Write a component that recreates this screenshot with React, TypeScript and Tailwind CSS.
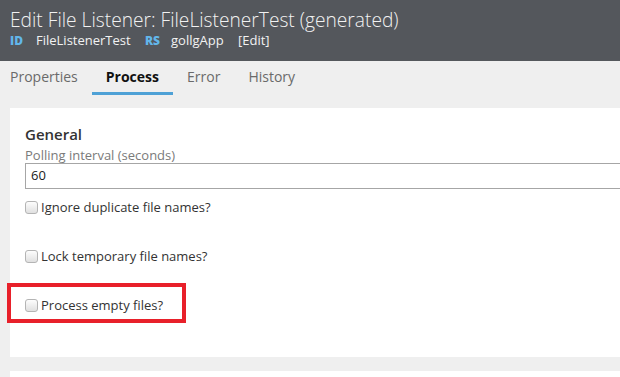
import React from "react";

function Check({ label, boxed }: { label: string; boxed?: boolean }) {
  return (
    <div className="relative flex items-center h-[20px]">
      <span className="w-[13px] h-[13px] rounded-[3px] border border-[#b4b4b4] bg-gradient-to-b from-[#fdfdfd] to-[#e0e0e0] shrink-0" />
      <span className="ml-[3px] text-[13px] leading-[20px] text-[#333]">{label}</span>
      {boxed && (
        <div className="absolute left-[-18px] top-[-12px] w-[179px] h-[40px] border-[4px] border-[#e8202a]" />
      )}
    </div>
  );
}

export default function App() {
  return (
    <div
      className="w-[620px] h-[377px] overflow-hidden bg-[#efefef]"
      style={{ fontFamily: '"Open Sans", "Noto Sans", sans-serif' }}
    >
      <div className="h-[61px] bg-[#54575c] px-[10px] pt-[7px]">
        <div className="text-[19.2px] leading-[26px] font-light text-[#f2f2f2] whitespace-nowrap">
          Edit File Listener: FileListenerTest (generated)
        </div>
        <div className="flex items-center h-[18px] mt-[-1px] text-[13px] text-[#f2f2f2] whitespace-nowrap">
          <span className="text-[12px] font-extrabold text-[#62b6ea] w-[26px]">ID</span>
          <span className="w-[109px]">FileListenerTest</span>
          <span className="text-[12px] font-extrabold text-[#62b6ea] w-[26px]">RS</span>
          <span className="w-[67px]">gollgApp</span>
          <span>[Edit]</span>
        </div>
      </div>

      <div className="h-[47px] flex pl-[10px] pt-[6px] text-[14px] leading-[20px]">
        <div className="pr-[14px] text-[#6a6a6a]">Properties</div>
        <div className="px-[14px] flex flex-col items-stretch">
          <span className="font-bold text-[#111]">Process</span>
          <span className="mt-[5px] mx-[-14px] h-[3px] bg-[#4ea1d6]" />
        </div>
        <div className="px-[14px] text-[#6a6a6a]">Error</div>
        <div className="px-[14px] text-[#6a6a6a]">History</div>
      </div>

      <div className="ml-[10px] h-[249px] bg-white pl-[15px] pt-[16px]">
        <div className="text-[15px] leading-[20px] font-semibold text-[#333]">General</div>
        <div className="mt-[3px] text-[13px] leading-[16px] text-[#7a7a7a]">Polling interval (seconds)</div>
        <div className="h-[26px] border border-[#a6a6a6] border-r-0 flex items-center pl-[5px] text-[13px] text-[#222]">
          60
        </div>
        <div className="mt-[8px] flex flex-col gap-[29px]">
          <Check label="Ignore duplicate file names?" />
          <Check label="Lock temporary file names?" />
          <Check label="Process empty files?" boxed />
        </div>
      </div>

      <div className="ml-[10px] mt-[14px] h-[40px] bg-white" />
    </div>
  );
}
